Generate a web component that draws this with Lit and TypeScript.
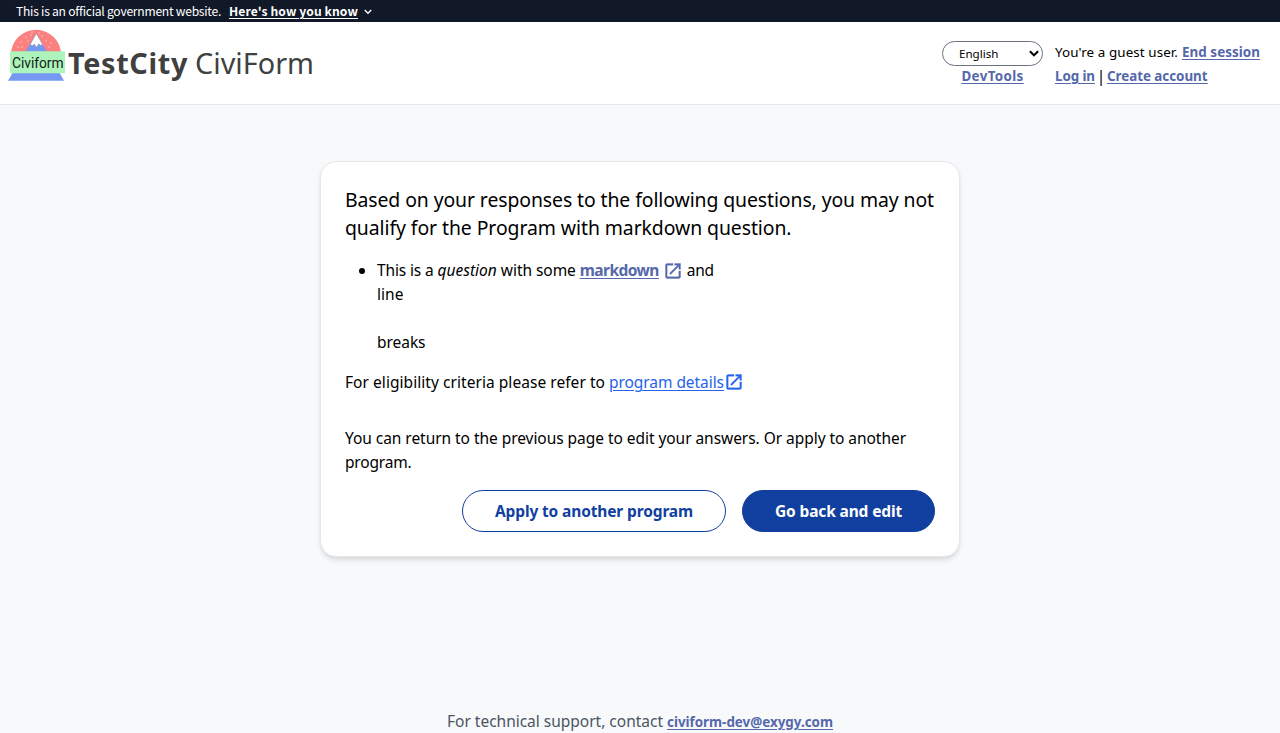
import { LitElement, html, css, svg } from "lit";
import { customElement, property } from "lit/decorators.js";

/** A single-line run of text, tracked so that it spans a given width. */
@customElement("text-run")
export class TextRun extends LitElement {
  @property() text = "";
  @property({ type: Number }) span = 0;

  static styles = css`
    :host { display: inline-block; white-space: nowrap; text-decoration: inherit; }
    .run { text-decoration: inherit; }
  `;

  render() {
    return html`<span class="run">${this.text}</span>`;
  }

  updated() {
    const run = this.renderRoot.querySelector<HTMLElement>(".run")!;
    run.style.letterSpacing = "0px";
    const natural = run.getBoundingClientRect().width;
    run.style.letterSpacing = `${(this.span - natural) / this.text.length}px`;
    this.style.width = `${this.span}px`;
  }
}

const t = (text: string, span: number) => html`<text-run .text=${text} .span=${span}></text-run>`;

const openIcon = html`<svg class="open" viewBox="0 0 24 24" fill="currentColor" stroke="currentColor" stroke-width=".4" aria-hidden="true">
  <path d="M19 19H5V5h7V3H5a2 2 0 0 0-2 2v14a2 2 0 0 0 2 2h14c1.1 0 2-.9 2-2v-7h-2v7zM14 3v2h3.59l-9.83 9.83 1.41 1.41L19 6.41V10h2V3h-7z" />
</svg>`;

const snow = [[17, 13], [22, 8], [27, 6], [14, 18], [18, 18], [24, 12], [38, 7], [42, 12], [47, 14], [39, 18], [45, 18], [28, 3], [35, 4]];

const logo = html`<svg class="logo" viewBox="8 29 58 53" aria-label="Civiform">
  <path d="M11 54.500a25 24.700 0 0 1 50 0z" fill="#fb8080" />
  ${snow.map(([x, y]) => svg`<circle cx=${x + 4} cy=${y + 29} r=".65" fill="#ffd3d3" />`)}
  <path d="M25.500 51.500 36.200 33.500 46.700 51.500z" fill="#7599f3" />
  <path d="M36.300 33.500 30.200 44.500l2.300 1.200 1.700-1.700 2.300 3.200 2.300-3.400 2 1.700 1.700-1.300z" fill="#fff" stroke="#8b8290" stroke-width=".45" />
  <path d="M12.500 73h47.200l4.300 7.800H8z" fill="#7599f3" />
  <path d="M10 51.200h55v22H10z" fill="#acf4bb" />
  <text x="12" y="67.700" font-family="Roboto, sans-serif" font-size="13.800" textLength="51.500" fill="#162019">Civiform</text>
</svg>`;

@customElement("app-root")
export class AppRoot extends LitElement {
  static styles = css`
    :host {
      display: flex; flex-direction: column; height: 733px; overflow: hidden;
      background: #f8f9fb; color: #000;
      font: 15.5px/24px "Noto Sans", sans-serif;
    }
    * { box-sizing: border-box; }
    svg { display: block; flex: none; }
    p, h1, h2, ul { margin: 0; font-weight: 400; }
    a { color: #5468aa; font-weight: 700; text-decoration: underline; text-decoration-thickness: 1px; text-underline-offset: 1.5px; }
    .banner {
      height: 22px; padding-left: 16px; flex: none; display: flex; gap: 8px;
      background: #111827; color: #fff; font: 12.1px/22px "Noto Sans CJK JP", sans-serif;
    }
    .know { font-weight: 700; text-decoration: underline; text-underline-offset: 1.5px; }
    .chevron { width: 8px; height: 6px; margin: 9px 0 0 -2px; }
    header {
      height: 83px; flex: none; display: flex; background: #fff;
      border-bottom: 1px solid #e5e7eb; padding: 7px 20px 0 8px;
    }
    .logo { width: 58px; height: 53px; }
    .title { display: flex; gap: 7px; margin: 16px 0 0 2px; font-size: 28.8px; line-height: 36px; color: #404040; }
    .title b { font-weight: 700; }
    .tools { margin-left: auto; display: flex; gap: 12px; font-size: 13.4px; padding-top: 11px; }
    .locale { width: 101px; display: flex; flex-direction: column; align-items: center; margin-top: 1px; line-height: 20px; }
    .select {
      width: 101px; height: 25px; border: 1px solid #6b7280; border-radius: 13px;
      display: flex; align-items: center; justify-content: space-between;
      padding: 0 3px 0 16px; font-size: 11.6px;
    }
    .select svg { width: 10px; height: 7px; }
    .account { width: 205px; }
    .row { display: flex; gap: 4px; }
    .bar { width: 4px; display: flex; justify-content: center; font-size: 15.5px; }
    .card {
      width: 640px; height: 396px; margin: 56px auto 0; flex: none; padding: 24px;
      background: #fff; border: 1px solid #e5e7eb; border-radius: 16px;
      box-shadow: 0 4px 6px -1px rgba(0,0,0,.1), 0 2px 4px -2px rgba(0,0,0,.1);
    }
    h2 { font-size: 19.4px; line-height: 28px; margin-bottom: 16px; }
    h2 text-run, .para text-run { display: block; }
    ul { padding-left: 32px; margin-bottom: 16px; }
    .breaks { margin-top: 24px; }
    .open { width: 20px; height: 20px; }
    .row .open { margin-top: 3px; color: #5468aa; }
    .row .details { color: #2563eb; font-weight: 400; display: flex; }
    .details .open { color: #2563eb; margin-top: 2px; }
    .para { margin: 32px 0 16px; }
    .actions { display: flex; justify-content: flex-end; gap: 16px; }
    button {
      height: 42px; border-radius: 21px; border: 1px solid #113f9f; padding: 0 32px;
      background: #fff; color: #113f9f; font: 700 15.5px/24px "Noto Sans", sans-serif;
    }
    .primary { background: #113f9f; color: #fff; }
    footer { margin-top: auto; height: 24px; display: flex; gap: 4px; justify-content: center; color: #4b5563; }
    footer a { font-size: 13.4px; line-height: 26px; }
  `;

  render() {
    return html`
      <div class="banner">
        ${t("This is an official government website.", 205)}
        <span class="know">${t("Here's how you know", 129)}</span>
        <svg class="chevron" viewBox="0 0 8 6"><path d="M.8 1 4 4.300 7.200 1" fill="none" stroke="#fff" stroke-width="1.300" /></svg>
      </div>
      <header>
        ${logo}
        <h1 class="title"><b>${t("TestCity", 120)}</b>${t("CiviForm", 119)}</h1>
        <div class="tools">
          <div class="locale">
            <div class="select">${t("English", 39.5)}
              <svg viewBox="0 0 9 6"><path d="M.8 1 4.500 4.600 8.200 1" fill="none" stroke="#000" stroke-width="1.800" /></svg>
            </div>
            <a>${t("DevTools", 62)}</a>
          </div>
          <div class="account">
            <div class="row">${t("You're a guest user.", 123)}<a>${t("End session", 78)}</a></div>
            <div class="row"><a>${t("Log in", 40)}</a><span class="bar">|</span><a>${t("Create account", 100.5)}</a></div>
          </div>
        </div>
      </header>
      <main class="card">
        <h2>
          ${t("Based on your responses to the following questions, you may not", 589)}
          ${t("qualify for the Program with markdown question.", 446.5)}
        </h2>
        <ul>
          <li>
            <div class="row">
              ${t("This is a", 56.5)}<em>${t("question", 59.3)}</em>${t("with some", 75)}
              <a>${t("markdown", 79)}</a>${openIcon}${t("and", 27)}
            </div>
            <div>${t("line", 26.5)}</div>
            <div class="breaks">${t("breaks", 48.5)}</div>
          </li>
        </ul>
        <div class="row">
          ${t("For eligibility criteria please refer to", 260)}
          <a class="details">${t("program details", 115)}${openIcon}</a>
        </div>
        <p class="para">
          ${t("You can return to the previous page to edit your answers. Or apply to another", 561)}
          ${t("program.", 66.5)}
        </p>
        <div class="actions">
          <button>${t("Apply to another program", 198)}</button>
          <button class="primary">${t("Go back and edit", 127)}</button>
        </div>
      </main>
      <footer>${t("For technical support, contact", 216)}<a>${t("civiform-dev@exygy.com", 166)}</a></footer>
    `;
  }
}
